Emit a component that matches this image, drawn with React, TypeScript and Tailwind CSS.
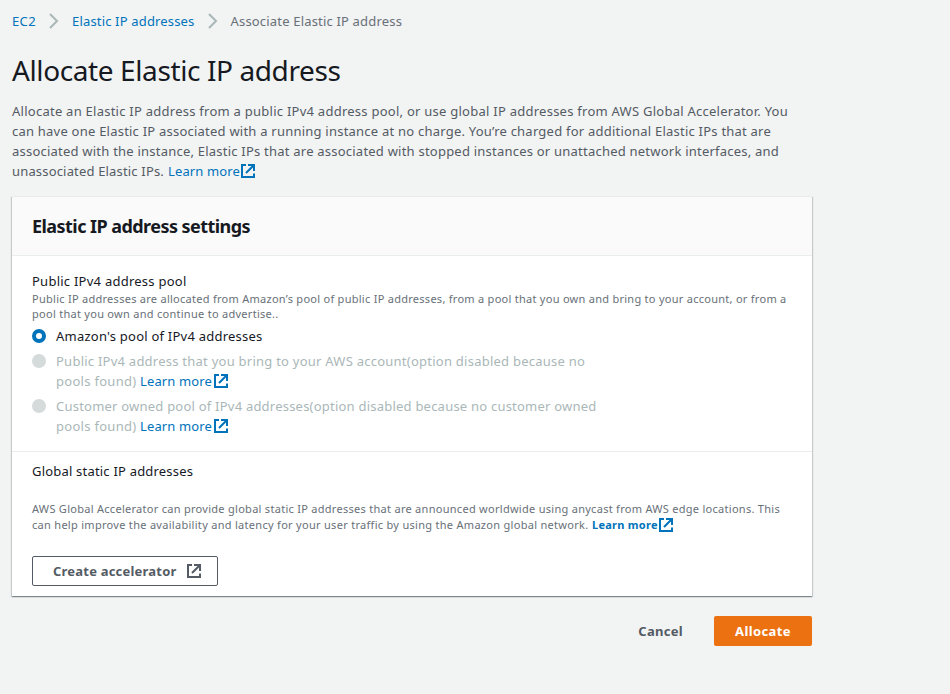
import type { ReactNode } from "react";

function ExternalIcon({ className = "" }: { className?: string }) {
  return (
    <svg viewBox="0 0 14 14" fill="none" stroke="currentColor" strokeWidth="2" className={`size-3.5 shrink-0 ${className}`}>
      <path d="M5 1H1v12h12V9.5" />
      <path d="M7 1H13v6M12.5 1.5l-7.5 7.5" />
    </svg>
  );
}

function Chevron() {
  return (
    <svg viewBox="0 0 10 16" fill="none" stroke="#aab7b8" strokeWidth="2" className="h-4 w-2.5 shrink-0">
      <path d="M1 1l7 7-7 7" />
    </svg>
  );
}

function LearnMore({ className }: { className: string }) {
  return (
    <a href="#" className={`flex items-center text-[#0073bb] ${className}`}>
      <span>Learn more</span>
      <ExternalIcon />
    </a>
  );
}

function Option({ checked = false, children }: { checked?: boolean; children: ReactNode }) {
  return (
    <div className="mb-[5px] flex gap-2.5">
      <span
        className={`mt-[3px] size-3.5 shrink-0 rounded-full ${checked ? "border-4 border-[#0073bb] bg-white" : "bg-[#d5dbdb]"}`}
      />
      <div className={checked ? "text-[#16191f]" : "text-[#aab7b8]"}>{children}</div>
    </div>
  );
}

export default function App() {
  return (
    <div className="h-[694px] bg-[#f2f3f3] pl-3 pt-[11px] font-['Noto_Sans','Open_Sans',sans-serif] text-[13px] leading-5 whitespace-nowrap text-[#545b64]">
      <div className="w-[800px]">
        <nav className="flex h-5 items-center">
          <a href="#" className="w-[37px] tracking-[0.37px] text-[#0073bb]">EC2</a>
          <Chevron />
          <a href="#" className="ml-[13px] w-[136px] tracking-[0.167px] text-[#0073bb]">Elastic IP addresses</a>
          <Chevron />
          <span className="ml-[12.5px] tracking-[0.18px] text-[#687078]">Associate Elastic IP address</span>
        </nav>

        <h1 className="mt-[21px] text-[28px] leading-9 tracking-[-0.391px] text-[#16191f]">Allocate Elastic IP address</h1>

        <div className="mt-[13px]">
          <p className="tracking-[0.253px]">Allocate an Elastic IP address from a public IPv4 address pool, or use global IP addresses from AWS Global Accelerator. You</p>
          <p className="tracking-[0.225px]">can have one Elastic IP associated with a running instance at no charge. You’re charged for additional Elastic IPs that are</p>
          <p className="tracking-[0.223px]">associated with the instance, Elastic IPs that are associated with stopped instances or unattached network interfaces, and</p>
          <div className="flex">
            <span className="w-[156px] tracking-[0.171px]">unassociated Elastic IPs.</span>
            <LearnMore className="gap-px tracking-[0.13px]" />
          </div>
        </div>

        <section className="mt-[15px] h-[400px] border-t border-[#eaeded] bg-white shadow-[0_1px_1px_0_rgba(0,28,36,0.3),1px_1px_1px_0_rgba(0,28,36,0.15),-1px_1px_1px_0_rgba(0,28,36,0.15)]">
          <header className="h-[59px] border-b border-[#eaeded] bg-[#fafafa] px-5 pt-[18px]">
            <h2 className="text-[18px] leading-[22px] font-bold tracking-[-0.55px] text-[#16191f]">Elastic IP address settings</h2>
          </header>

          <div className="h-[196px] border-b border-[#eaeded] px-5 pt-[15px]">
            <h3 className="tracking-[0.248px] text-[#16191f]">Public IPv4 address pool</h3>
            <div className="mb-[5px] text-[11px] leading-[15px] text-[#687078]">
              <p className="tracking-[0.272px]">Public IP addresses are allocated from Amazon’s pool of public IP addresses, from a pool that you own and bring to your account, or from a</p>
              <p className="tracking-[0.279px]">pool that you own and continue to advertise..</p>
            </div>
            <Option checked>
              <p className="tracking-[0.23px]">Amazon's pool of IPv4 addresses</p>
            </Option>
            <Option>
              <p className="tracking-[0.244px]">Public IPv4 address that you bring to your AWS account(option disabled because no</p>
              <div className="flex">
                <span className="w-[84px] tracking-[0.293px]">pools found)</span>
                <LearnMore className="gap-0.5 tracking-[0.13px]" />
              </div>
            </Option>
            <Option>
              <p className="tracking-[0.221px]">Customer owned pool of IPv4 addresses(option disabled because no customer owned</p>
              <div className="flex">
                <span className="w-[84px] tracking-[0.293px]">pools found)</span>
                <LearnMore className="gap-0.5 tracking-[0.13px]" />
              </div>
            </Option>
          </div>

          <div className="px-5 pt-[9px]">
            <h3 className="tracking-[0.2px] text-[#16191f]">Global static IP addresses</h3>
            <div className="mt-5 text-[11px] leading-4 text-[#687078]">
              <p className="tracking-[0.283px]">AWS Global Accelerator can provide global static IP addresses that are announced worldwide using anycast from AWS edge locations. This</p>
              <div className="flex">
                <span className="w-[560px] tracking-[0.294px]">can help improve the availability and latency for your user traffic by using the Amazon global network.</span>
                <LearnMore className="gap-px font-bold tracking-[0.27px]" />
              </div>
            </div>
            <button className="mt-[23px] flex h-[30px] w-[186px] items-center rounded-[2px] border border-[#545b64] bg-white pl-5 font-bold tracking-[0.209px]">
              <span className="w-[134px] text-left">Create accelerator</span>
              <ExternalIcon />
            </button>
          </div>
        </section>

        <div className="mt-5 flex h-[30px] items-center justify-end">
          <button className="mr-[31px] font-bold tracking-[0.3px]">Cancel</button>
          <button className="h-[30px] w-[98px] rounded-[2px] bg-[#ec7211] font-bold tracking-[0.4px] text-white">Allocate</button>
        </div>
      </div>
    </div>
  );
}
